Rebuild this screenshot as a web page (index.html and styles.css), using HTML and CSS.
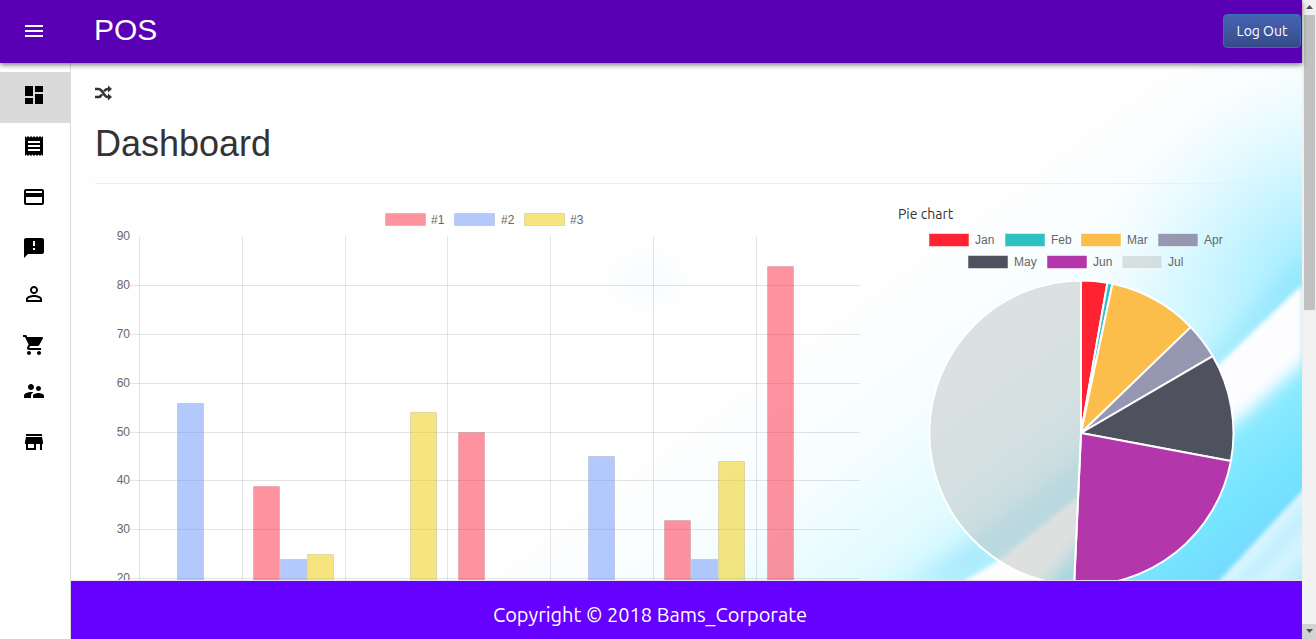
FILE: index.html
```html
<!DOCTYPE html>
<html lang="en">
<head>
<meta charset="utf-8">
<title>POS - Dashboard</title>
<meta name="viewport" content="width=device-width, initial-scale=1">
<link rel="stylesheet" href="styles.css">
</head>
<body>
<div class="app">
  <div class="page">
    <header class="topbar">
      <button class="menu-button" type="button" aria-label="Menu">
        <svg class="icon" viewBox="0 0 24 24"><path d="M3 18h18v-2H3v2zm0-5h18v-2H3v2zm0-7v2h18V6H3z"/></svg>
      </button>
      <a class="brand" href="#">POS</a>
      <button class="logout" type="button">Log Out</button>
    </header>
    <div class="body">
      <nav class="sidebar" aria-label="Main">
        <a class="nav-item active" href="#" aria-label="Dashboard"><svg class="icon" viewBox="0 0 24 24"><path d="M3 13h8V3H3v10zm0 8h8v-6H3v6zm10 0h8V11h-8v10zm0-18v6h8V3h-8z"/></svg></a>
        <a class="nav-item" href="#" aria-label="Receipts"><svg class="icon" viewBox="0 0 24 24"><path d="M18 17H6v-2h12v2zm0-4H6v-2h12v2zm0-4H6V7h12v2zM3 22l1.5-1.500L6 22l1.500-1.500L9 22l1.500-1.500L12 22l1.500-1.500L15 22l1.500-1.500L18 22l1.500-1.500L21 22V2l-1.500 1.500L18 2l-1.500 1.500L15 2l-1.500 1.500L12 2l-1.500 1.500L9 2 7.500 3.500 6 2 4.500 3.500 3 2v20z"/></svg></a>
        <a class="nav-item" href="#" aria-label="Payments"><svg class="icon" viewBox="0 0 24 24"><path d="M20 4H4c-1.110 0-1.990.89-1.990 2L2 18c0 1.110.89 2 2 2h16c1.110 0 2-.89 2-2V6c0-1.110-.89-2-2-2zm0 14H4v-6h16v6zm0-10H4V6h16v2z"/></svg></a>
        <a class="nav-item compact" href="#" aria-label="Feedback"><svg class="icon" viewBox="0 0 24 24"><path d="M20 2H4c-1.100 0-1.990.9-1.990 2L2 22l4-4h14c1.100 0 2-.9 2-2V4c0-1.100-.9-2-2-2zm-7 12h-2v-2h2v2zm0-4h-2V5h2v5z"/></svg></a>
        <a class="nav-item" href="#" aria-label="Profile"><svg class="icon" viewBox="0 0 24 24"><path d="M12 5.900c1.160 0 2.100.94 2.100 2.100s-.94 2.100-2.100 2.100S9.900 9.160 9.900 8s.94-2.100 2.100-2.100m0 9c2.970 0 6.100 1.460 6.100 2.100v1.100H5.900V17c0-.64 3.130-2.100 6.100-2.100M12 4C9.790 4 8 5.790 8 8s1.790 4 4 4 4-1.790 4-4-1.790-4-4-4zm0 9c-2.670 0-8 1.340-8 4v3h16v-3c0-2.660-5.330-4-8-4z"/></svg></a>
        <a class="nav-item compact" href="#" aria-label="Cart"><svg class="icon" viewBox="0 0 24 24"><path d="M7 18c-1.100 0-1.990.9-1.990 2S5.900 22 7 22s2-.9 2-2-.9-2-2-2zM1 2v2h2l3.600 7.590-1.350 2.450c-.16.28-.25.61-.25.96 0 1.100.9 2 2 2h12v-2H7.420c-.14 0-.25-.11-.25-.25l.03-.12.900-1.630h7.450c.75 0 1.410-.41 1.750-1.030l3.580-6.490c.08-.14.12-.31.12-.48 0-.55-.45-1-1-1H5.210l-.94-2H1zm16 16c-1.100 0-1.990.9-1.990 2s.89 2 1.990 2 2-.9 2-2-.9-2-2-2z"/></svg></a>
        <a class="nav-item" href="#" aria-label="Staff"><svg class="icon" viewBox="0 0 24 24"><path d="M16.500 12c1.380 0 2.490-1.120 2.490-2.500S17.880 7 16.500 7C15.120 7 14 8.120 14 9.500s1.120 2.500 2.500 2.500zM9 11c1.660 0 2.990-1.340 2.990-3S10.660 5 9 5C7.340 5 6 6.340 6 8s1.340 3 3 3zm7.500 3c-1.830 0-5.500.92-5.500 2.750V19h11v-2.250c0-1.830-3.670-2.750-5.500-2.750zM9 13c-2.330 0-7 1.170-7 3.500V19h7v-2.250c0-.85.33-2.340 2.370-3.470C10.500 13.100 9.660 13 9 13z"/></svg></a>
        <a class="nav-item" href="#" aria-label="Store"><svg class="icon" viewBox="0 0 24 24"><path d="M20 4H4v2h16V4zm1 10v-2l-1-5H4l-1 5v2h1v6h10v-6h4v6h2v-6h1zm-9 4H6v-4h6v4z"/></svg></a>
      </nav>
      <div class="main">
        <main class="content">
          <svg class="backdrop" viewBox="0 0 1231 517" preserveAspectRatio="xMaxYMax slice" aria-hidden="true">
            <defs>
              <linearGradient id="sky" gradientUnits="userSpaceOnUse" x1="396" y1="528" x2="576" y2="768">
                <stop offset="0" stop-color="#fefefe"/><stop offset=".4" stop-color="#f6fdff"/>
                <stop offset=".75" stop-color="#e2fbff"/><stop offset="1" stop-color="#b4f0ff"/>
              </linearGradient>
              <radialGradient id="glow" gradientUnits="userSpaceOnUse" cx="1260" cy="230" r="230">
                <stop offset="0" stop-color="#74e2ff" stop-opacity=".75"/><stop offset=".5" stop-color="#90e8ff" stop-opacity=".35"/><stop offset="1" stop-color="#b8f3ff" stop-opacity="0"/>
              </radialGradient>
              <linearGradient id="deep" gradientUnits="userSpaceOnUse" x1="1120" y1="320" x2="1220" y2="450">
                <stop offset="0" stop-color="#b4f1ff"/><stop offset=".4" stop-color="#8ceaff"/><stop offset=".75" stop-color="#76e4ff"/><stop offset="1" stop-color="#74dcff"/>
              </linearGradient>
              <linearGradient id="edge" gradientUnits="userSpaceOnUse" x1="1180" y1="475" x2="1231" y2="522">
                <stop offset="0" stop-color="#e4f8ff"/><stop offset=".35" stop-color="#c4f0ff"/><stop offset=".6" stop-color="#d4f4ff"/><stop offset="1" stop-color="#b4ebff"/>
              </linearGradient>
              <filter id="soft" x="-10%" y="-10%" width="120%" height="120%"><feGaussianBlur stdDeviation="8"/></filter>
              <filter id="slight" x="-10%" y="-10%" width="120%" height="120%"><feGaussianBlur stdDeviation="2"/></filter>
            </defs>
            <rect width="1231" height="517" fill="url(#sky)"/>
            <rect x="1000" width="231" height="460" fill="url(#glow)"/>
            <ellipse cx="575" cy="217" rx="34" ry="22" fill="#f9fdff" filter="url(#soft)"/>
            <path d="M840 517Q960 440 1151 278L1231 195V222L1151 299L1007 434L895 517Z" fill="#7adcf4" opacity=".3" filter="url(#soft)"/>
            <path d="M895 517L927 498L1007 434L1151 299L1231 222V540H880Z" fill="#fdfdff" filter="url(#slight)"/>
            <path d="M968 530L1012 476L1100 412L1170 356L1260 276V540H960Z" fill="url(#deep)" filter="url(#soft)"/>
            <path d="M1149 517L1231 428L1250 410V530H1140Z" fill="url(#edge)" filter="url(#slight)"/>
          </svg>
          <div class="content-inner">
            <svg class="shuffle" viewBox="0 0 18 16" aria-hidden="true">
              <path d="M0 4h3.500C8 4 8.500 12 12.500 12h1.500M0 12h3.500c1.800 0 2.700-1.300 3.500-2.700M9 6.300C10 5 11 4 12.500 4h1.500" fill="none" stroke="#333" stroke-width="2.600"/>
              <path d="M13 .4L17 4l-4 3.600zM13 8.400l4 3.600-4 3.600z" fill="#333"/>
            </svg>
            <h1 class="title">Dashboard</h1>
            <hr class="rule">
            <div class="charts">
              <svg class="chart" viewBox="0 0 765 400" role="img" aria-label="Bar chart">
                <g stroke="#000" stroke-opacity=".1">
                  <path d="M35 81.500H765M35 130.500H765M35 179.500H765M35 228.500H765M35 276.500H765M35 325.500H765M35 374.500H765"/>
                  <path d="M44.500 32V400M147.500 32V400M250.500 32V400M352.500 32V400M455.500 32V400M558.500 32V400M661.500 32V400"/>
                </g>
                <g stroke="#000" stroke-opacity=".1">
                  <path class="series-1" d="M290.500 9.500h40v12h-40zM158.500 400V282.500h26V400M363.500 400V228.500h26V400M569.500 400V316.500h26V400M672.500 400V62.500h26V400"/>
                  <path class="series-2" d="M359.500 9.500h40v12h-40zM82.500 400V199.500h26V400M185.500 400V355.500h26V400M493.500 400V252.500h26V400M596.500 400V355.500h26V400"/>
                  <path class="series-3" d="M429.500 9.500h40v12h-40zM212.500 400V350.500h26V400M315.500 400V208.500h26V400M623.500 400V257.500h26V400"/>
                </g>
                <g class="chart-text">
                  <text x="336" y="20">#1</text><text x="406" y="20">#2</text><text x="475" y="20">#3</text>
                  <g text-anchor="end">
                    <text x="35" y="36">90</text><text x="35" y="85">80</text><text x="35" y="134">70</text><text x="35" y="183">60</text><text x="35" y="232">50</text><text x="35" y="280">40</text><text x="35" y="329">30</text><text x="35" y="378">20</text>
                  </g>
                </g>
              </svg>
              <section class="pie">
                <div class="pie-title">Pie chart</div>
                <svg class="chart" viewBox="0 0 380 370" role="img" aria-label="Pie chart">
                  <g stroke="#fff" stroke-opacity=".5">
                    <path d="M31 9.500h40v13h-40z" fill="#ff2233"/>
                    <path d="M107 9.500h40v13h-40z" fill="#2ec1c1"/>
                    <path d="M183 9.500h40v13h-40z" fill="#fcbe4b"/>
                    <path d="M260 9.500h40v13h-40z" fill="#9698b2"/>
                    <path d="M70 31.500h40v13h-40z" fill="#50515f"/>
                    <path d="M149 31.500h40v13h-40z" fill="#b336ab"/>
                    <path d="M224 31.500h40v13h-40z" fill="#c4c8c6" fill-opacity=".55"/>
                  </g>
                  <g class="chart-text">
                    <text x="77" y="20">Jan</text><text x="153" y="20">Feb</text><text x="229" y="20">Mar</text><text x="306" y="20">Apr</text>
                    <text x="116" y="42">May</text><text x="195" y="42">Jun</text><text x="270" y="42">Jul</text>
                  </g>
                  <g transform="translate(183 209)" stroke="#fff" stroke-width="2" stroke-linejoin="bevel">
                    <path d="M0 0V-152.500A152.500 152.500 0 0 1 26.400-150.200Z" fill="#ff2233"/>
                    <path d="M0 0L26.400-150.200A152.500 152.500 0 0 1 31.400-149.200Z" fill="#2ec1c1"/>
                    <path d="M0 0L31.400-149.200A152.500 152.500 0 0 1 109.700-105.900Z" fill="#fcbe4b"/>
                    <path d="M0 0L109.700-105.900A152.500 152.500 0 0 1 131.700-76.900Z" fill="#9698b2"/>
                    <path d="M0 0L131.700-76.900A152.500 152.500 0 0 1 149.900 28.100Z" fill="#50515f"/>
                    <path d="M0 0L149.900 28.100A152.500 152.500 0 0 1-6.900 152.300Z" fill="#b336ab"/>
                    <path d="M0 0L-6.900 152.300A152.500 152.500 0 0 1 0-152.500Z" fill="#c4c8c6" fill-opacity=".55"/>
                  </g>
                </svg>
              </section>
            </div>
          </div>
        </main>
        <footer class="footer">Copyright © 2018 Bams_Corporate</footer>
      </div>
    </div>
  </div>
  <div class="scrollbar" aria-hidden="true">
    <svg class="arrow" viewBox="0 0 14 15"><path d="M4 9h7L7.500 5z"/></svg>
    <div class="track"><div class="thumb"></div></div>
    <svg class="arrow down" viewBox="0 0 14 15"><path d="M4 5h7L7.500 9z"/></svg>
  </div>
</div>
</body>
</html>
```
FILE: styles.css
```css
* { box-sizing: border-box; }

body {
  margin: 0;
  font: 14px/20px "Ubuntu", "Noto Sans", sans-serif;
  color: #333;
  background: #fff;
}

.app { display: flex; height: 100vh; overflow: hidden; }
.page { flex: 1; min-width: 0; display: flex; flex-direction: column; }

.topbar {
  position: relative;
  z-index: 2;
  flex: none;
  display: flex;
  align-items: center;
  height: 63px;
  padding: 0 1px 1px 0;
  background: #5900b5;
  box-shadow: 0 2px 5px rgba(0, 0, 0, .5);
}
.menu-button {
  width: 68px;
  height: 48px;
  padding: 0;
  border: 0;
  background: none;
  color: #fff;
}
.icon { display: block; width: 24px; height: 24px; margin: 0 auto; fill: currentColor; }
.brand {
  flex: 1;
  padding: 0 0 2px 26px;
  font: 30px/32px "Liberation Sans", Arial, sans-serif;
  color: #fff;
  text-decoration: none;
}
.logout {
  min-width: 78px;
  height: 34px;
  padding: 0 11px;
  border: 1px solid #3b6cb4;
  border-radius: 4px;
  background: linear-gradient(#4664b4, #364c88);
  font: inherit;
  color: #fff;
}

.body { flex: 1; min-height: 0; display: flex; }
.sidebar {
  flex: none;
  width: 71px;
  padding-top: 9px;
  border-right: 1px solid #dcdcdc;
  background: #fff;
}
.nav-item { display: block; height: 51px; padding: 11px 2px 0 0; color: #000; }
.nav-item.compact { height: 46px; }
.nav-item.active { background: #dadada; }

.main { flex: 1; min-width: 0; display: flex; flex-direction: column; }
.content { position: relative; flex: 1; min-height: 0; overflow: hidden; }
.backdrop { position: absolute; inset: 0; width: 100%; height: 100%; }
.content-inner { position: relative; padding: 22px 24px; }
.shuffle { display: block; width: 18px; height: 16px; }
.title {
  margin: 23px 0 19px;
  font: 400 36px/40px "Liberation Sans", Arial, sans-serif;
}
.rule { margin: 0 0 20px; border: 0; border-top: 1px solid #eee; }
.charts {
  display: grid;
  grid-template-columns: 765fr 380fr;
  gap: 38px;
  align-items: start;
}
.chart { display: block; width: 100%; height: auto; }
.chart-text { font: 12px "Liberation Sans", Arial, sans-serif; fill: #666; }
.series-1 { fill: rgba(255, 38, 64, .5); }
.series-2 { fill: rgba(104, 147, 250, .5); }
.series-3 { fill: rgba(238, 204, 0, .5); }

.footer {
  flex: none;
  height: 59px;
  padding: 20px 73px 0 0;
  border-top: 1px solid #e7e7e7;
  background: #6600ff;
  font-size: 20px;
  line-height: 28px;
  text-align: center;
  color: #fff;
}

.scrollbar { flex: none; width: 14px; display: flex; flex-direction: column; background: #f1f1f1; }
.arrow { flex: none; display: block; width: 14px; height: 15px; fill: #505050; }
.arrow.down { background: #d2d2d2; }
.track { flex: 1; padding: 0 1px 0 2px; }
.thumb { height: 295px; background: #c1c1c1; }
```
